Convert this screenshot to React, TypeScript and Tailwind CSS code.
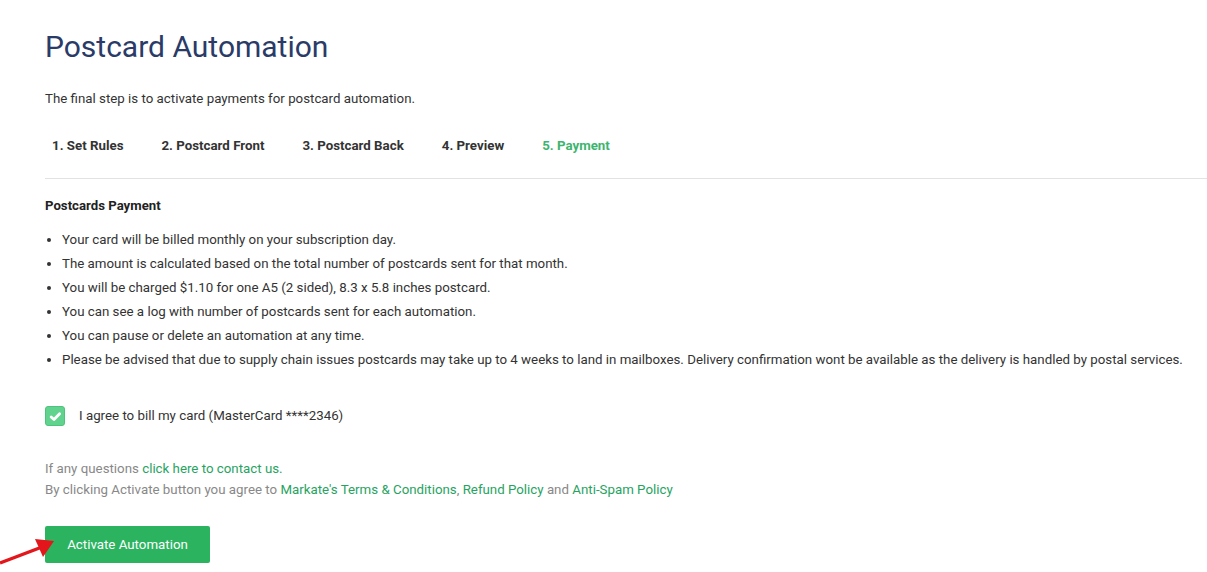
import React from "react"

const STEPS = ["1. Set Rules", "2. Postcard Front", "3. Postcard Back", "4. Preview", "5. Payment"] as const

const NOTES = [
  "Your card will be billed monthly on your subscription day.",
  "The amount is calculated based on the total number of postcards sent for that month.",
  "You will be charged $1.10 for one A5 (2 sided), 8.3 x 5.8 inches postcard.",
  "You can see a log with number of postcards sent for each automation.",
  "You can pause or delete an automation at any time.",
  "Please be advised that due to supply chain issues postcards may take up to 4 weeks to land in mailboxes. Delivery confirmation wont be available as the delivery is handled by postal services.",
]

export default function App() {
  return (
    <div className="relative w-[1207px] h-[572px] overflow-hidden bg-white pl-[45px] pt-[30px] font-['Roboto',sans-serif] text-[#333]">
      <h1 className="text-[30px] leading-[33px] text-[#2a3b68]">Postcard Automation</h1>

      <p className="mt-[26px] text-[13.3px] leading-5">
        The final step is to activate payments for postcard automation.
      </p>

      {/* Steps */}
      <nav className="mt-[27px] flex gap-[38px] border-b border-[#e2e2e2] pl-[7px] pb-[22px]">
        {STEPS.map((step, i) => (
          <span
            key={step}
            className={
              i === STEPS.length - 1
                ? "text-[13.3px] leading-5 font-bold text-[#3db56f]"
                : "text-[13.3px] leading-5 font-bold text-[#333]"
            }
          >
            {step}
          </span>
        ))}
      </nav>

      <h3 className="mt-[17px] text-[13.2px] leading-5 font-bold text-[#222]">Postcards Payment</h3>

      <ul className="mt-[12px] list-disc pl-[17px] text-[13.3px] leading-6 text-[#333]">
        {NOTES.map((note) => (
          <li key={note}>{note}</li>
        ))}
      </ul>

      {/* Agreement */}
      <label className="mt-[34px] flex items-center gap-[14px] text-[13.3px] leading-5">
        <span className="flex h-5 w-5 items-center justify-center rounded-[3px] border border-[#4cc47c] bg-[#62d38f]">
          <svg viewBox="0 0 12 12" className="h-[13px] w-[13px]" fill="none" stroke="white" strokeWidth={2.6} strokeLinecap="round" strokeLinejoin="round">
            <path d="M2 6.4l2.6 2.4 5.2-5.4" />
          </svg>
        </span>
        I agree to bill my card (MasterCard ****2346)
      </label>

      <div className="mt-[32px] text-[13.3px] leading-[21px] text-[#888]">
        <p>
          If any questions <a className="text-[#27a35f]">click here to contact us.</a>
        </p>
        <p>
          By clicking Activate button you agree to{" "}
          <a className="text-[#27a35f]">Markate's Terms &amp; Conditions</a>,{" "}
          <a className="text-[#27a35f]">Refund Policy</a> and{" "}
          <a className="text-[#27a35f]">Anti-Spam Policy</a>
        </p>
      </div>

      <button className="mt-[26px] h-[37px] w-[165px] rounded-[2px] bg-[#2bb35f] text-[13.3px] text-white">
        Activate Automation
      </button>

      {/* annotation arrow */}
      <svg className="absolute left-0 top-[532px] h-[40px] w-[60px]" viewBox="0 0 60 40">
        <line x1="0" y1="31" x2="42" y2="15" stroke="#e3161b" strokeWidth={3.4} />
        <polygon points="54,9 35,7 43,25" fill="#e3161b" />
      </svg>
    </div>
  )
}
